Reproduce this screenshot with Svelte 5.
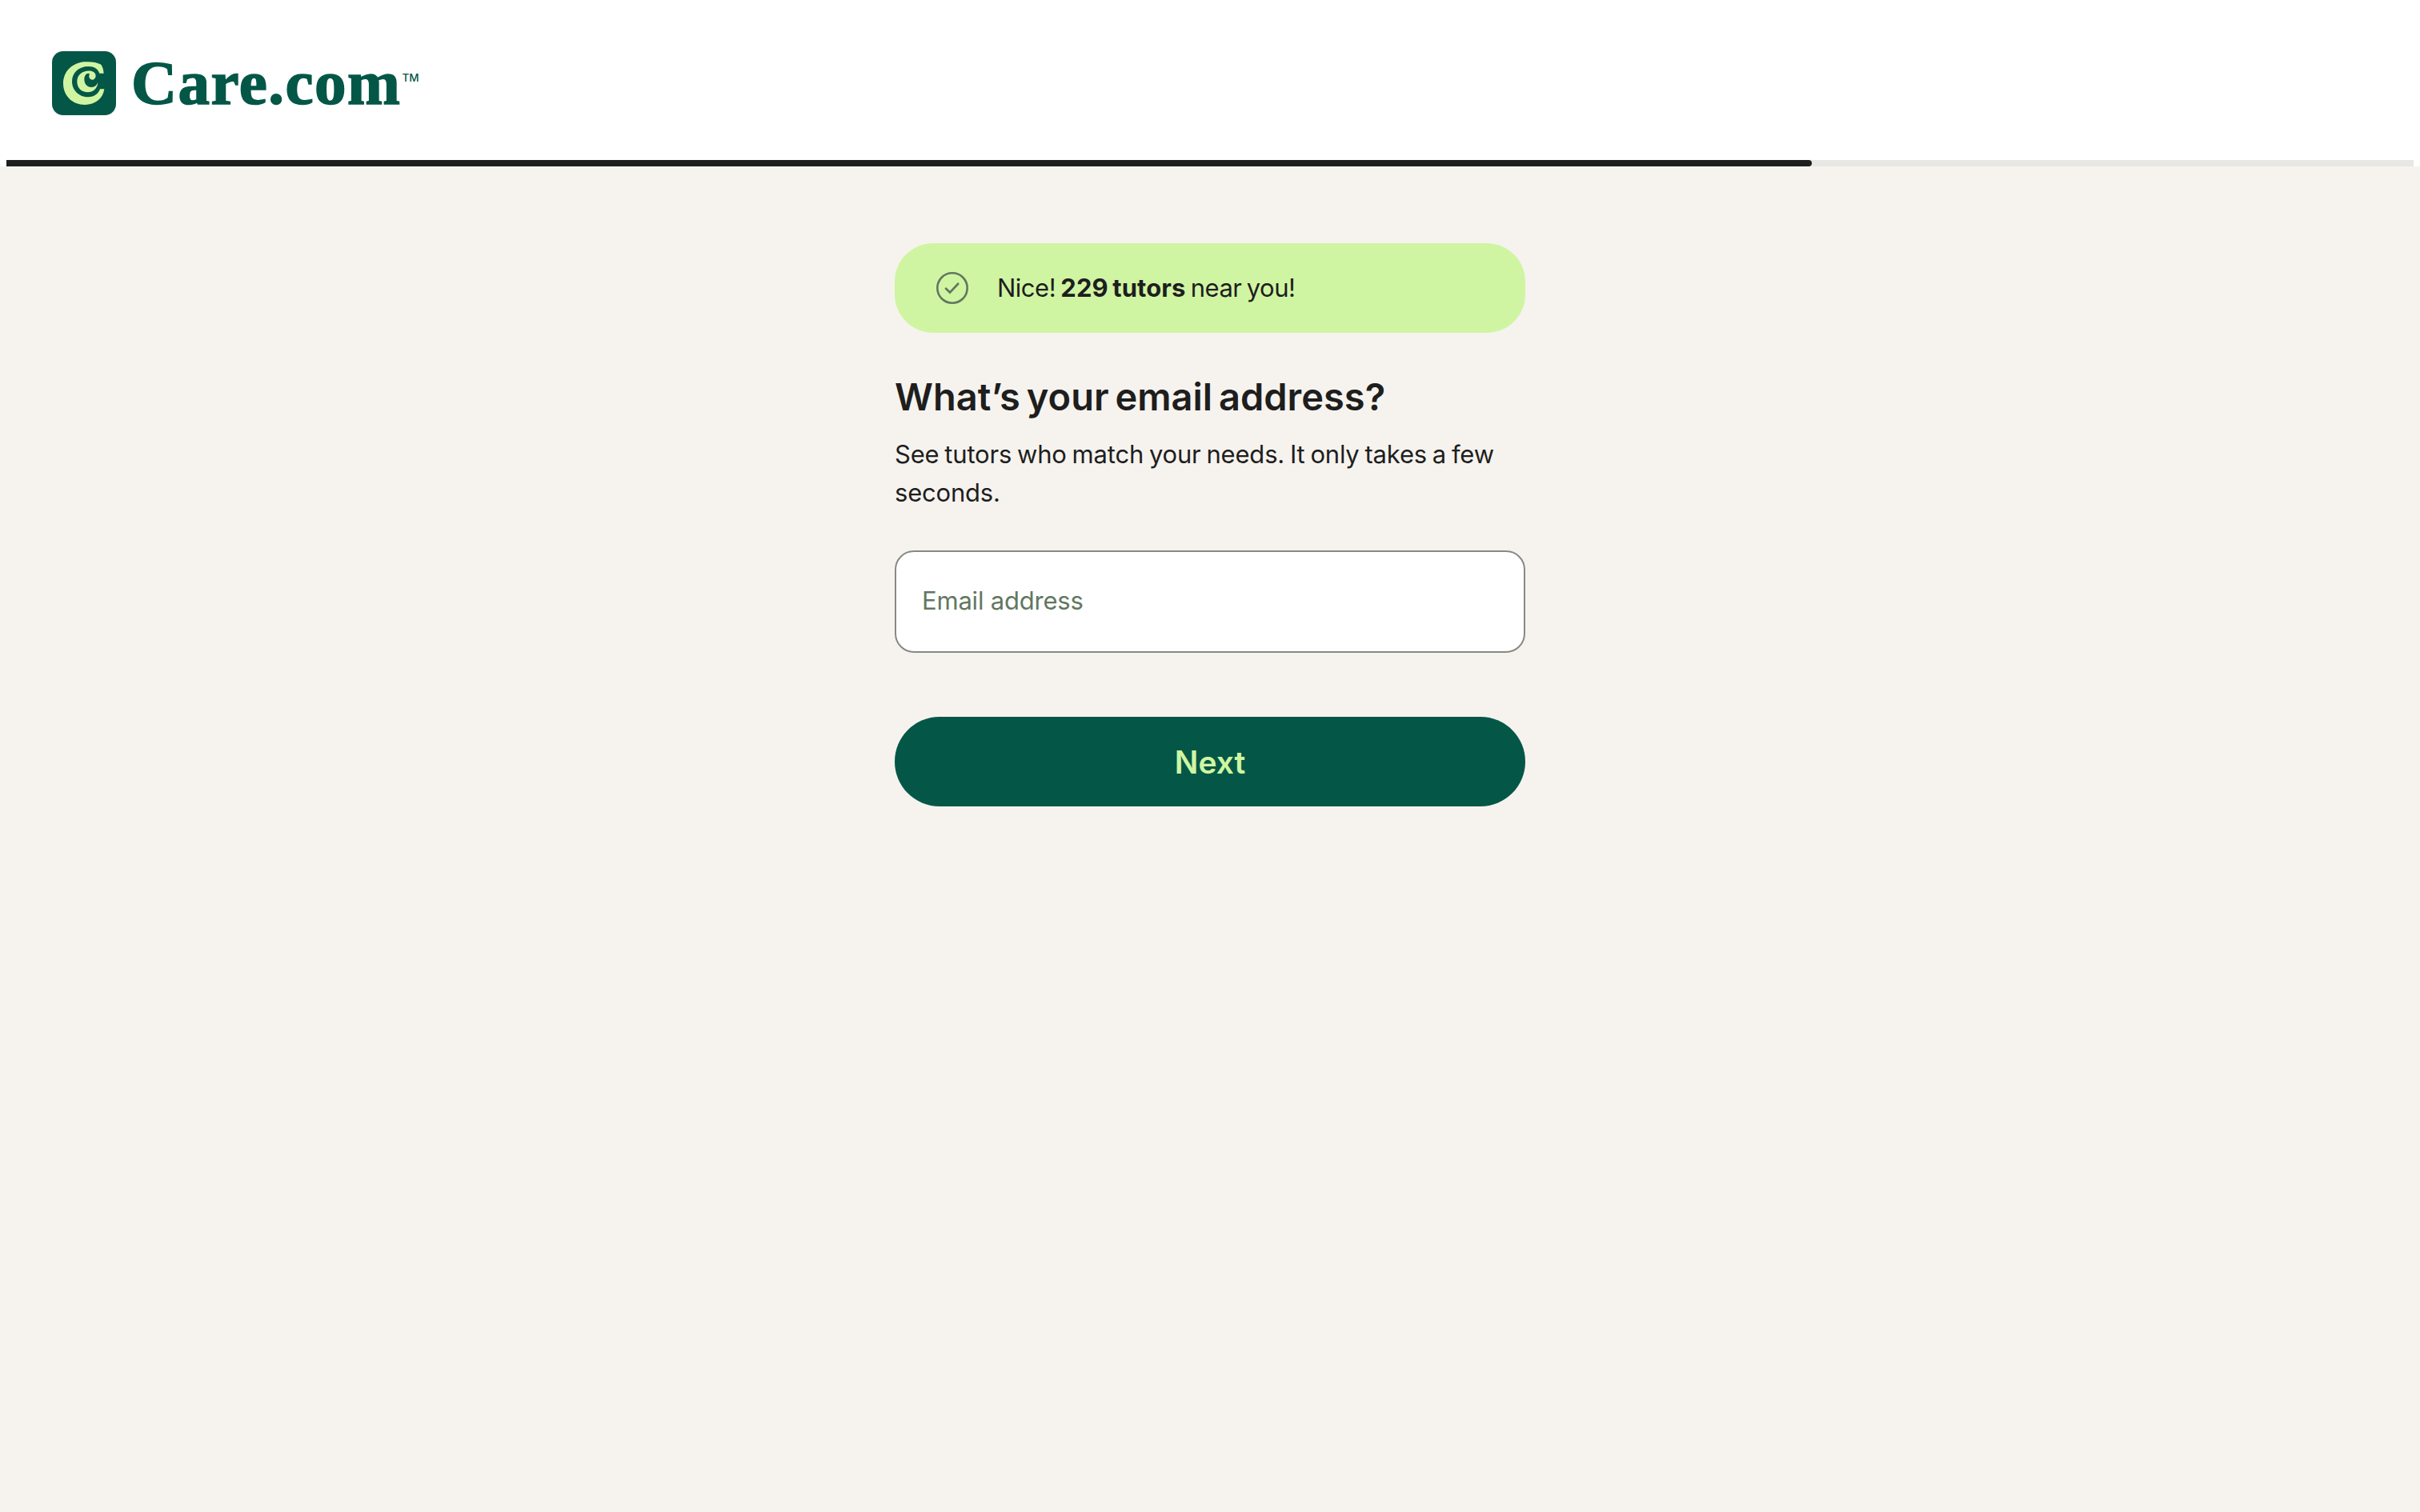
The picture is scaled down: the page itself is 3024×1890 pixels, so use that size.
<script lang="ts">
  let email: string = '';

  const progress = 75;
  const tutorCount = 229;
</script>

<div class="page">
  <header>
    <div class="brand">
      <svg class="mark" viewBox="0 0 240 240" aria-hidden="true">
        <rect width="240" height="240" rx="42" fill="#045747" />
        <path
          fill="#d0f5a2"
          d="M184 50C168 41 143 38 121 40C75 44 42 77 42 121C42 168 77 201 123 201C162 201 191 178 196 142H180C173 161 157 172 137 172C101 172 75 146 75 113C75 81 101 57 136 57C159 57 172 67 178 83H194C193 70 190 59 184 50Z"
        />
        <path
          fill="#d0f5a2"
          d="M171 119C166 130 158 135 147 135C131 135 121 122 121 105C121 91 130 80 139 84C143 86 138 90 139 97C141 106 151 110 158 105C166 99 166 86 157 79C149 72 132 72 119 77C103 83 94 96 94 114C94 138 111 154 134 154C154 154 169 140 172 120Z"
        />
      </svg>
      <span class="wordmark">Care.com</span><span class="tm">TM</span>
    </div>
    <div class="track">
      <div class="fill" style="width: {progress}%"></div>
    </div>
  </header>

  <main>
    <div class="banner">
      <svg class="check" viewBox="0 0 40 40" fill="none" aria-hidden="true">
        <circle cx="20" cy="20" r="18.7" stroke="#627761" stroke-width="2.6" />
        <path d="M12 20.8L17 25.6L27.2 14.8" stroke="#627761" stroke-width="2.8" stroke-linecap="round" />
      </svg>
      <p>Nice! <strong>{tutorCount} tutors</strong> near you!</p>
    </div>

    <h1>What’s your email address?</h1>
    <p class="subtitle">See tutors who match your needs. It only takes a few seconds.</p>

    <input type="email" placeholder="Email address" aria-label="Email address" bind:value={email} />
    <button type="button">Next</button>
  </main>
</div>

<style>
  :global(body) {
    margin: 0;
    background: #f6f3ee;
  }

  .page {
    min-height: 1890px;
    background: #f6f3ee;
    color: #1e1e1e;
    font-family: Inter, 'Liberation Sans', sans-serif;
  }

  header {
    display: flex;
    flex-direction: column;
    justify-content: space-between;
    box-sizing: border-box;
    height: 208px;
    padding: 64px 8px 0;
    background: #fff;
  }

  .brand {
    display: flex;
    height: 80px;
    padding-left: 57px;
    color: #045747;
  }

  .mark {
    width: 80px;
    height: 80px;
    margin-right: 19px;
  }

  .wordmark {
    font-family: 'Liberation Serif', serif;
    font-size: 79px;
    font-weight: 700;
    line-height: 80px;
    letter-spacing: 1.5px;
    -webkit-text-stroke: 1.6px #045747;
  }

  .tm {
    margin: 21px 0 0 1px;
    font-size: 13.5px;
    font-weight: 500;
    line-height: 24px;
  }

  .track {
    height: 8px;
    background: #e8e7e4;
  }

  .fill {
    height: 8px;
    border-radius: 0 4px 4px 0;
    background: #1e1e1e;
  }

  main {
    display: flex;
    flex-direction: column;
    width: 788px;
    margin: 0 auto;
    padding-top: 96px;
  }

  .banner {
    display: flex;
    align-items: center;
    gap: 36px;
    box-sizing: border-box;
    height: 112px;
    padding: 0 52px;
    border-radius: 48px;
    background: #d0f5a2;
  }

  .check {
    width: 40px;
    height: 40px;
  }

  .banner p {
    margin: 0;
    font-size: 31px;
    line-height: 48px;
    letter-spacing: -0.5px;
    word-spacing: -2px;
    white-space: nowrap;
  }

  .banner strong {
    font-weight: 650;
    letter-spacing: 0.1px;
  }

  h1 {
    margin: 48px 0 0;
    font-size: 47px;
    font-weight: 600;
    line-height: 64px;
    letter-spacing: 0;
    word-spacing: -4px;
    white-space: nowrap;
  }

  .subtitle {
    margin: 16px 0 0;
    font-size: 31px;
    line-height: 48px;
    letter-spacing: -0.2px;
    word-spacing: -1.6px;
  }

  input {
    box-sizing: border-box;
    width: 100%;
    height: 128px;
    margin-top: 48px;
    padding: 0 32px 3px;
    border: 2px solid #868a84;
    border-radius: 24px;
    background: #fff;
    color: #1e1e1e;
    font-family: inherit;
    font-size: 31px;
    letter-spacing: -0.2px;
  }

  input::placeholder {
    color: #627761;
    opacity: 1;
  }

  button {
    height: 112px;
    margin-top: 80px;
    border: none;
    border-radius: 56px;
    background: #045747;
    color: #d0f5a2;
    font-family: inherit;
    font-size: 39px;
    font-weight: 600;
    cursor: pointer;
  }
</style>
